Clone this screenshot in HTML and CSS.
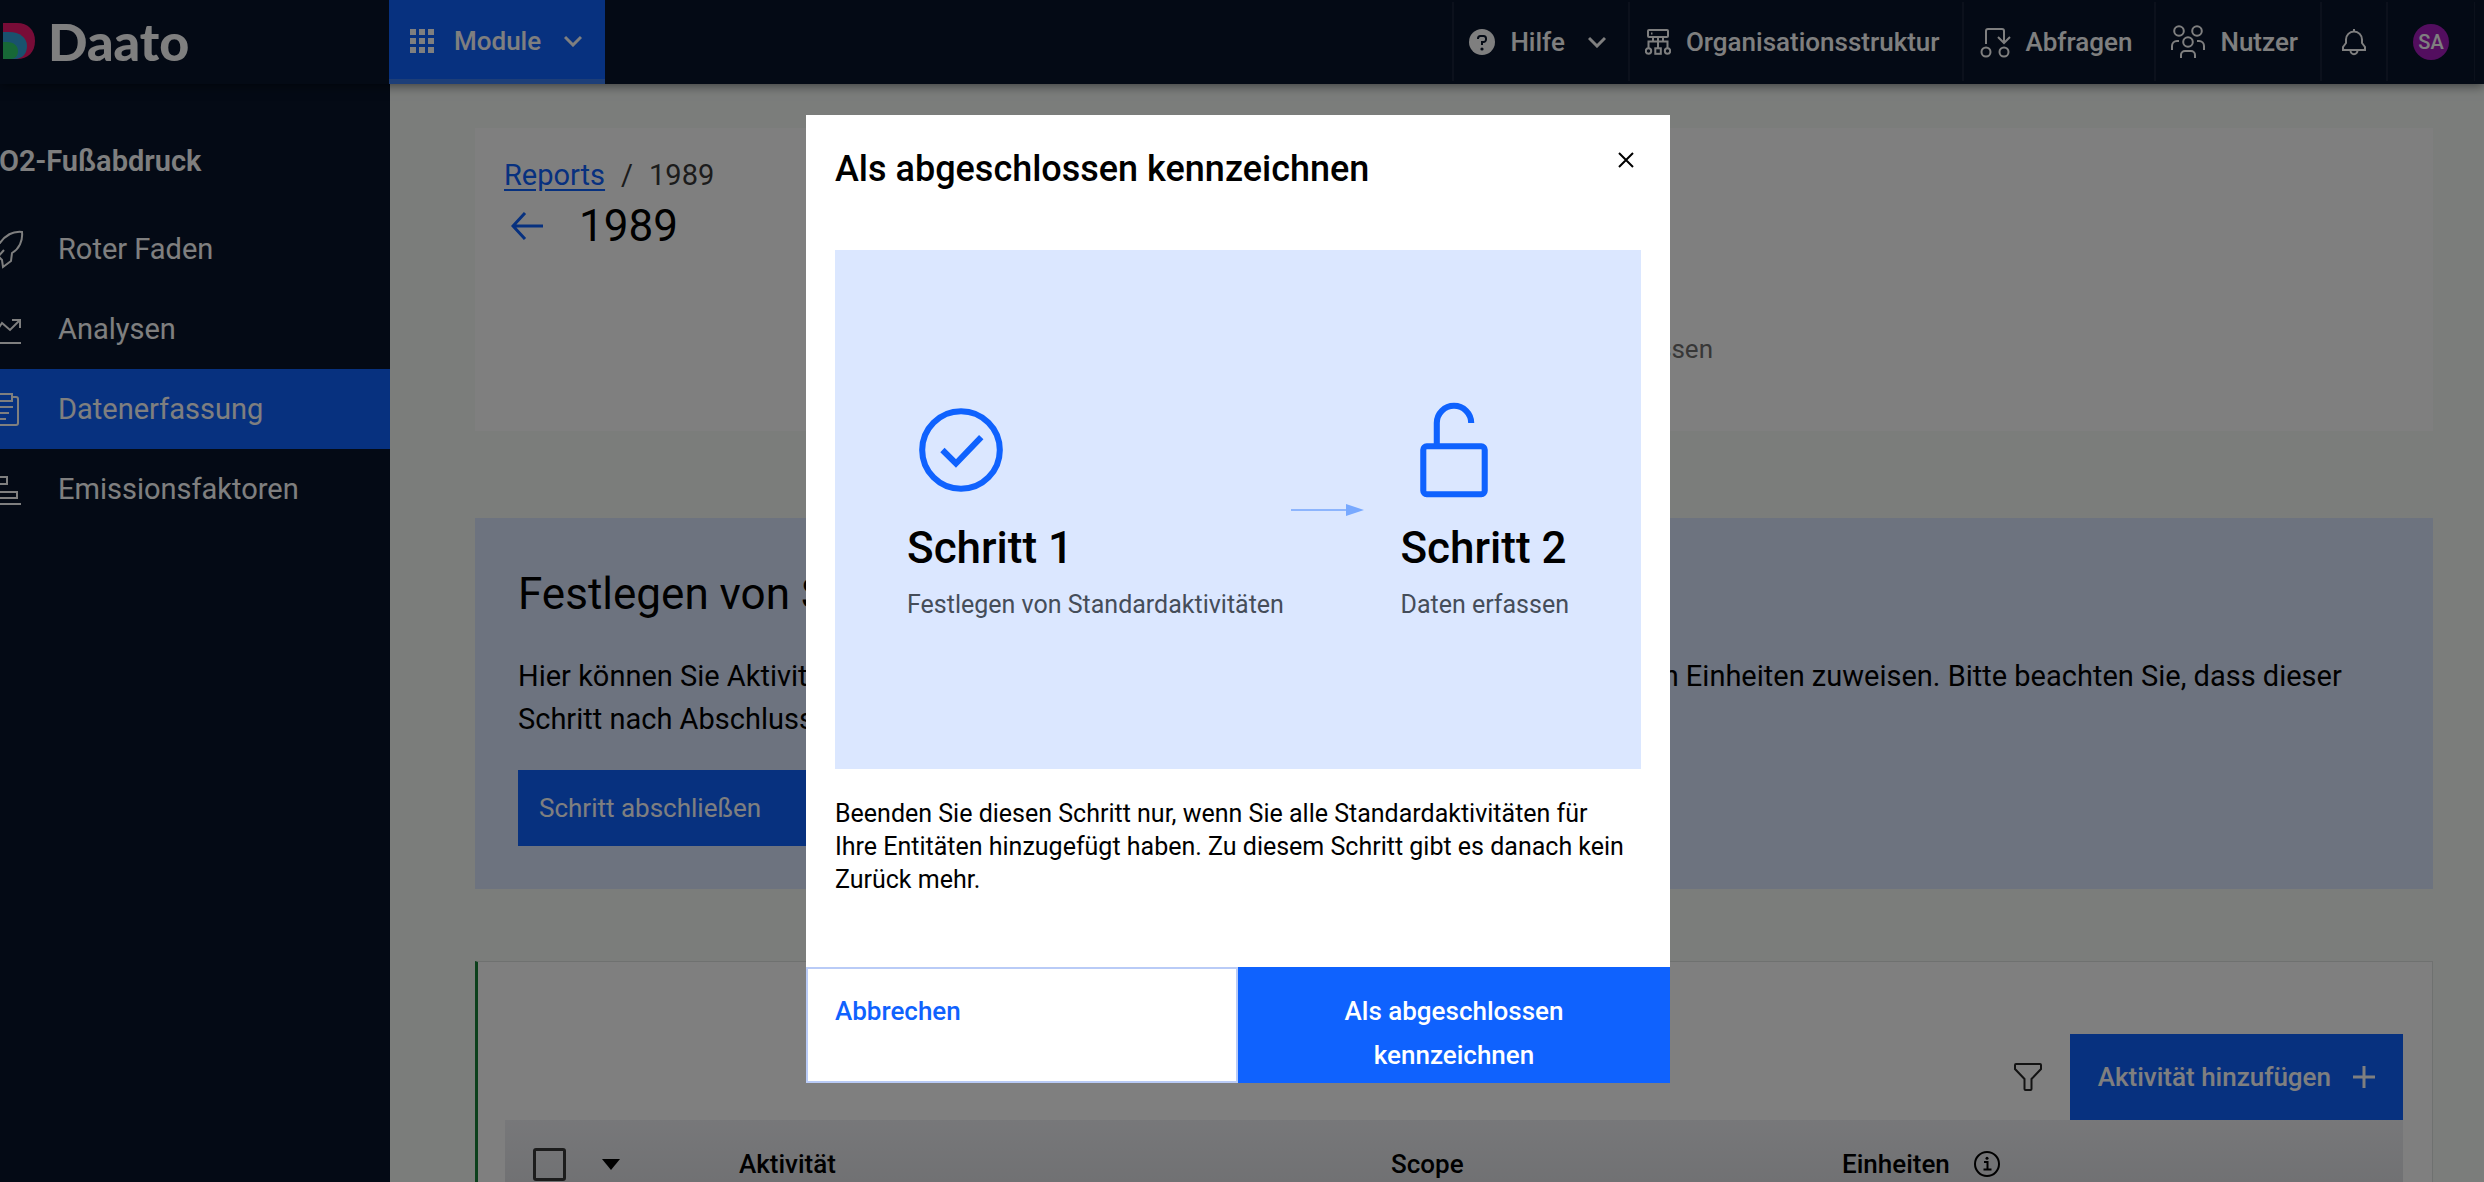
FILE: index.html
```html
<!DOCTYPE html>
<html lang="de">
<head>
   <meta charset="UTF-8">
   <meta name="viewport" content="width=device-width, initial-scale=1.0">
   <title>Daato</title>
   <link rel="stylesheet" href="styles.css">
</head>
<body>
   <header class="header">
      <a class="logo" href="#">
         <svg class="logo-mark" viewBox="0 0 32 36" aria-hidden="true">
            <path d="M0 0H14C25 0 32 7 32 18S25 36 14 36H0Z" fill="#f0186e"/>
            <path d="M0 9H6C17 9 24 15 24 23C24 31 19 36 12 36H0Z" fill="#33a4dc"/>
            <path d="M0 19H4C11 19 15 23 15 28C15 33 12 36 7 36H0Z" fill="#2fd06c"/>
         </svg>
         <span>Daato</span>
      </a>
      <button class="module-btn">
         <svg width="26" height="26" viewBox="0 0 26 26" fill="currentColor" aria-hidden="true">
            <path d="M1 1h6v6H1zM10 1h6v6h-6zM19 1h6v6h-6zM1 10h6v6H1zM10 10h6v6h-6zM19 10h6v6h-6zM1 19h6v6H1zM10 19h6v6h-6zM19 19h6v6h-6z"/>
         </svg>
         Module
         <svg class="chevron" viewBox="0 0 18 12" aria-hidden="true"><path d="M1 2l8 8 8-8"/></svg>
      </button>
      <nav class="header-nav">
         <button class="nav-item">
            <svg width="26" height="26" viewBox="0 0 26 26" aria-hidden="true">
               <circle cx="13" cy="13" r="13" fill="currentColor"/>
               <path d="M9 10V9.500a2.500 2.500 0 0 1 2.500-2.500h3a2.500 2.500 0 0 1 2.500 2.500v1a2.500 2.500 0 0 1-2.500 2.500H13v3" fill="none" stroke="#08142a" stroke-width="2"/>
               <circle cx="13" cy="20" r="1.600" fill="#08142a"/>
            </svg>
            Hilfe
            <svg class="chevron chevron-wide" viewBox="0 0 18 12" aria-hidden="true"><path d="M1 2l8 8 8-8"/></svg>
         </button>
         <a class="nav-item" href="#">
            <svg class="line-icon" width="26" height="28" viewBox="0 0 26 28" aria-hidden="true">
               <rect x="3" y="2" width="20" height="7" rx="1"/>
               <path d="M6 5.500h1.500M13 9v11M8 9v4.500M18 9v4.500M3.500 20v-6.500h19V20"/>
               <circle cx="3.500" cy="23" r="2.700"/>
               <circle cx="22.500" cy="23" r="2.700"/>
               <rect x="10.300" y="20.300" width="5.500" height="5.500"/>
            </svg>
            Organisationsstruktur
         </a>
         <a class="nav-item" href="#">
            <svg class="line-icon" width="32" height="32" viewBox="0 0 32 32" aria-hidden="true">
               <path d="M7 18V5a2 2 0 0 1 2-2h14a2 2 0 0 1 2 2v12M19 11l6 6 6-6"/>
               <circle cx="7" cy="26" r="4.500"/>
               <circle cx="25" cy="26" r="4.500"/>
            </svg>
            Abfragen
         </a>
         <a class="nav-item" href="#">
            <svg class="line-icon" width="34" height="34" viewBox="0 0 34 34" aria-hidden="true">
               <circle cx="8" cy="6" r="4.800"/>
               <circle cx="26" cy="6" r="4.800"/>
               <circle cx="17" cy="17" r="4.800"/>
               <path d="M1 25v-4a5 5 0 0 1 5-5h2M33 25v-4a5 5 0 0 0-5-5h-2M10 33v-3a4 4 0 0 1 4-4h6a4 4 0 0 1 4 4v3"/>
            </svg>
            Nutzer
         </a>
         <button class="nav-item bell-item" aria-label="Benachrichtigungen">
            <svg class="line-icon" width="24" height="28" viewBox="0 0 24 28" aria-hidden="true">
               <path d="M12 1v2.500M1 22v-3l3-4v-3.500a8 8 0 0 1 16 0V15l3 4v3zM8.500 22.500a3.500 3.700 0 0 0 7 0"/>
            </svg>
         </button>
         <button class="nav-item user-item"><span class="avatar">SA</span></button>
      </nav>
   </header>

   <div class="layout">
      <aside class="sidebar">
         <h2 class="sidebar-title">CO2-Fußabdruck</h2>
         <nav class="sidebar-nav">
            <a class="sidebar-item" href="#">
               <svg class="line-icon" width="40" height="40" viewBox="0 0 40 40" aria-hidden="true">
                  <path d="M38 3C28 2 21 7 16 14L8 15l-5 6 7 2 8 8 1 7 8-6 1-8C35 20 39 12 38 3zM20 21l-8 9"/>
               </svg>
               Roter Faden
            </a>
            <a class="sidebar-item" href="#">
               <svg class="line-icon" width="40" height="40" viewBox="0 0 40 40" aria-hidden="true">
                  <path d="M7 4v30h30M9 27l9-13 8 7 10-10M28 11h8v8"/>
               </svg>
               Analysen
            </a>
            <a class="sidebar-item active" href="#">
               <svg class="line-icon" width="40" height="40" viewBox="0 0 40 40" aria-hidden="true">
                  <path d="M14 8H10a2 2 0 0 0-2 2v24a2 2 0 0 0 2 2h22a2 2 0 0 0 2-2V10a2 2 0 0 0-2-2h-4M14 5h14v7H14zM14 18h15M14 24h11M14 30h8"/>
               </svg>
               Datenerfassung
            </a>
            <a class="sidebar-item" href="#">
               <svg class="line-icon" width="40" height="40" viewBox="0 0 40 40" aria-hidden="true">
                  <path d="M7 4v31h30M7 8h16v7H7zM7 23h26v6H7z"/>
               </svg>
               Emissionsfaktoren
            </a>
         </nav>
      </aside>

      <main class="content">
         <section class="page-head">
            <div class="breadcrumb"><a href="#">Reports</a><span>/</span><span>1989</span></div>
            <div class="title-row">
               <a class="back-link" href="#" aria-label="Zurück">
                  <svg width="32" height="28" viewBox="0 0 32 28" aria-hidden="true"><path d="M32 14H2M14 1L2 14l12 13"/></svg>
               </a>
               <h1 class="page-title">1989</h1>
            </div>
            <p class="step-label">Daten erfassen</p>
         </section>

         <section class="info-panel">
            <h2 class="info-title">Festlegen von Standardaktivitäten</h2>
            <p class="info-text">Hier können Sie Aktivitäten hinzufügen, bearbeiten und sie anschließend den gewünschten Einheiten zuweisen. Bitte beachten Sie, dass dieser Schritt nach Abschluss gesperrt wird.</p>
            <button class="primary-btn finish-btn">Schritt abschließen</button>
         </section>

         <section class="table-card">
            <div class="toolbar">
               <button class="filter-btn" aria-label="Filter">
                  <svg width="28" height="28" viewBox="0 0 28 28" aria-hidden="true">
                     <path d="M2 1h24a1 1 0 0 1 1 1v4L17.500 16v10a1 1 0 0 1-1 1h-5a1 1 0 0 1-1-1V16L1 6V2a1 1 0 0 1 1-1z"/>
                  </svg>
               </button>
               <button class="primary-btn add-btn">
                  Aktivität hinzufügen
                  <svg width="22" height="22" viewBox="0 0 22 22" aria-hidden="true"><path d="M11 0v22M0 11h22"/></svg>
               </button>
            </div>
            <table class="activity-table">
               <thead>
                  <tr>
                     <th class="col-select"><input class="checkbox" type="checkbox" aria-label="Alle auswählen"></th>
                     <th class="col-sort">
                        <svg width="18" height="11" viewBox="0 0 18 11" aria-hidden="true"><path d="M0 0h18L9 11z"/></svg>
                     </th>
                     <th class="col-activity">Aktivität</th>
                     <th class="col-scope">Scope</th>
                     <th>
                        <span class="with-info">Einheiten
                           <svg width="26" height="26" viewBox="0 0 26 26" aria-hidden="true">
                              <circle cx="13" cy="13" r="12" fill="none" stroke="#000" stroke-width="2"/>
                              <path d="M10 11h3.500v7.500M9.500 18.500h8" fill="none" stroke="#000" stroke-width="2"/>
                              <circle cx="13" cy="7.200" r="1.500"/>
                           </svg>
                        </span>
                     </th>
                  </tr>
               </thead>
            </table>
         </section>
      </main>
   </div>

   <div class="overlay">
      <div class="modal" role="dialog" aria-modal="true" aria-labelledby="modal-title">
         <div class="modal-header">
            <h2 class="modal-title" id="modal-title">Als abgeschlossen kennzeichnen</h2>
            <button class="close-btn" aria-label="Schließen">
               <svg width="16" height="16" viewBox="0 0 16 16" aria-hidden="true"><path d="M1 1l14 14M15 1L1 15"/></svg>
            </button>
         </div>
         <div class="modal-body">
            <div class="steps">
               <div class="step">
                  <svg class="step-icon" viewBox="0 0 32 32" aria-hidden="true">
                     <circle cx="16" cy="16" r="11.500"/>
                     <path d="M10.500 16l4 4 7.500-7.800"/>
                  </svg>
                  <h3 class="step-title">Schritt 1</h3>
                  <p class="step-text">Festlegen von Standardaktivitäten</p>
               </div>
               <svg class="step-arrow" width="73" height="12" viewBox="0 0 73 12" aria-hidden="true">
                  <path d="M0 6h56" stroke="#8db5fd" stroke-width="2"/>
                  <path d="M55 0l18 6-18 6z" fill="#78a9ff"/>
               </svg>
               <div class="step">
                  <svg class="step-icon" viewBox="0 0 32 32" aria-hidden="true">
                     <rect x="6.900" y="14.900" width="18.200" height="14.200" rx="1"/>
                     <path d="M10.900 15V8a5.100 5.100 0 0 1 10.200 0"/>
                  </svg>
                  <h3 class="step-title">Schritt 2</h3>
                  <p class="step-text">Daten erfassen</p>
               </div>
            </div>
            <p class="modal-text">Beenden Sie diesen Schritt nur, wenn Sie alle Standardaktivitäten für<br>Ihre Entitäten hinzugefügt haben. Zu diesem Schritt gibt es danach kein Zurück mehr.</p>
         </div>
         <div class="modal-footer">
            <button class="modal-btn cancel-btn">Abbrechen</button>
            <button class="modal-btn confirm-btn">Als abgeschlossen kennzeichnen</button>
         </div>
      </div>
   </div>
</body>
</html>
```

FILE: styles.css
```css
* {
   box-sizing: border-box;
}
body {
   margin: 0;
   height: 100vh;
   overflow: hidden;
   display: flex;
   flex-direction: column;
   font-family: Roboto, "Liberation Sans", sans-serif;
   font-size: 26px;
   color: #000;
   background-color: #f6faf7;
}
h1, h2, h3, p {
   margin: 0;
}
button {
   font: inherit;
   border: none;
   border-radius: 0;
   cursor: pointer;
}
svg {
   flex-shrink: 0;
}
.line-icon {
   fill: none;
   stroke: currentColor;
   stroke-width: 2;
}

/* header */
.header {
   position: relative;
   display: flex;
   height: 84px;
   flex-shrink: 0;
   background-color: #08142a;
   color: #fff;
   box-shadow: 0 2px 10px rgba(0, 0, 0, 0.5);
}
.logo {
   display: flex;
   align-items: center;
   gap: 13px;
   width: 389px;
   padding: 0 0 3px 3px;
   color: #fff;
   font-family: Lato, sans-serif;
   font-size: 52px;
   font-weight: 900;
   line-height: 48px;
   text-decoration: none;
}
.logo-mark {
   width: 32px;
   height: 36px;
}
.module-btn {
   display: flex;
   align-items: center;
   gap: 19px;
   padding: 3px 23px 0 20px;
   background-color: #0f62fe;
   border-bottom: 5px solid #3a7cf0;
   color: #fff;
   font-weight: 500;
}
.chevron {
   width: 18px;
   height: 12px;
   margin-left: 4px;
   fill: none;
   stroke: currentColor;
   stroke-width: 3;
}
.chevron-wide {
   margin-left: 8px;
}
.header-nav {
   display: flex;
   margin-left: auto;
   margin-right: 9px;
   padding: 2px 0 3px;
}
.nav-item {
   display: flex;
   align-items: center;
   gap: 15px;
   padding: 0 22px 0 15px;
   background: none;
   border-left: 2px solid #182338;
   color: #fff;
   font-weight: 500;
   text-decoration: none;
}
.bell-item {
   padding: 0 20px;
}
.user-item {
   padding: 0 25px;
   border-right: 1px solid #182338;
}
.avatar {
   width: 36px;
   height: 36px;
   border-radius: 50%;
   background-color: #a61cbe;
   font-size: 20px;
   line-height: 36px;
   text-align: center;
}

/* layout */
.layout {
   display: flex;
   flex: 1;
   min-height: 0;
}
.sidebar {
   width: 390px;
   flex-shrink: 0;
   overflow: hidden;
   background-color: #08142a;
   color: #fff;
}
.sidebar-title {
   margin-left: -20px;
   padding: 60px 0 31px;
   font-size: 29px;
   line-height: 34px;
   font-weight: 600;
   white-space: nowrap;
}
.sidebar-item {
   display: flex;
   align-items: center;
   gap: 34px;
   height: 80px;
   margin-left: -16px;
   color: #fff;
   font-size: 29px;
   text-decoration: none;
}
.sidebar-item.active {
   background-color: #0f62fe;
}
.content {
   flex: 1;
   min-width: 0;
   padding: 44px 51px 0 85px;
}

/* page head */
.page-head {
   height: 303px;
   padding: 29px;
   background-color: #fff;
}
.breadcrumb {
   display: flex;
   gap: 16px;
   font-size: 29px;
   line-height: 36px;
   color: #393939;
}
.breadcrumb a {
   color: #0f62fe;
   text-underline-offset: 4px;
}
.title-row {
   display: flex;
   align-items: center;
   gap: 36px;
   padding-left: 7px;
}
.back-link {
   display: flex;
}
.back-link svg {
   fill: none;
   stroke: #0f62fe;
   stroke-width: 3;
}
.page-title,
.info-title {
   font-size: 44px;
   line-height: 66px;
   font-weight: 400;
}
.step-label {
   padding: 72px 691px 0 0;
   line-height: 36px;
   color: #6f6f6f;
   text-align: right;
}

/* info panel */
.info-panel {
   margin-top: 87px;
   padding: 43px;
   background-color: #dbe7ff;
}
.info-text {
   margin-top: 28px;
   font-size: 29px;
   line-height: 43px;
}
.primary-btn {
   background-color: #0f62fe;
   color: #fff;
}
.finish-btn {
   height: 76px;
   margin-top: 29px;
   padding: 0 96px 0 21px;
}

/* table */
.table-card {
   margin-top: 72px;
   padding: 72px 29px 0 27px;
   background-color: #fff;
   border: 1px solid #dfe3e0;
   border-left: 3px solid #198038;
}
.toolbar {
   display: flex;
   justify-content: flex-end;
}
.filter-btn {
   display: flex;
   align-items: center;
   padding: 0 28px;
   background: none;
}
.filter-btn svg {
   fill: none;
   stroke: #262626;
   stroke-width: 2;
}
.add-btn {
   display: flex;
   align-items: center;
   gap: 22px;
   height: 86px;
   padding: 0 28px;
   font-weight: 500;
}
.add-btn svg {
   stroke: currentColor;
   stroke-width: 3;
}
.activity-table {
   width: 100%;
   border-collapse: collapse;
   table-layout: fixed;
   background: linear-gradient(#eff0f4, #dcdde1);
}
.activity-table th {
   height: 88px;
   padding: 0;
   font-weight: 500;
   text-align: left;
}
.activity-table .col-select {
   width: 97px;
   padding-left: 28px;
}
.col-sort {
   width: 137px;
}
.col-sort svg {
   display: block;
}
.col-activity {
   width: 652px;
}
.col-scope {
   width: 451px;
}
.checkbox {
   display: block;
   appearance: none;
   width: 33px;
   height: 33px;
   margin: 0;
   border: 3px solid #393939;
   border-radius: 3px;
}
.with-info {
   display: flex;
   align-items: center;
   gap: 24px;
}

/* modal */
.overlay {
   position: fixed;
   inset: 0;
   display: flex;
   align-items: center;
   justify-content: center;
   padding: 16px 8px 0 0;
   background-color: rgba(0, 0, 0, 0.5);
}
.modal {
   width: 864px;
   background-color: #fff;
}
.modal-header {
   display: flex;
   justify-content: space-between;
   padding: 29px 29px 0;
}
.modal-title {
   font-size: 36px;
   line-height: 50px;
   font-weight: 500;
}
.close-btn {
   display: flex;
   align-self: flex-start;
   padding: 8px 7px;
   background: none;
}
.close-btn svg {
   stroke: #000;
   stroke-width: 2;
}
.modal-body {
   padding: 56px 29px 71px;
}
.steps {
   display: flex;
   align-items: center;
   justify-content: space-between;
   height: 519px;
   padding: 0 72px;
   background-color: #dbe7ff;
}
.step-icon {
   display: block;
   width: 108px;
   height: 108px;
   fill: none;
   stroke: #0f62fe;
   stroke-width: 1.8;
}
.step-title {
   margin: 15px 0 10px;
   font-size: 44px;
   line-height: 58px;
   font-weight: 500;
}
.step-text {
   font-size: 25px;
   line-height: 36px;
   color: #454d59;
}
.step-arrow {
   margin-right: 30px;
}
.modal-text {
   margin-top: 28px;
   font-size: 25px;
   line-height: 33px;
}
.modal-footer {
   display: flex;
}
.modal-btn {
   width: 50%;
   height: 116px;
   font-weight: 500;
   line-height: 44px;
}
.cancel-btn {
   display: flex;
   padding: 20px 27px;
   border: 2px solid #b9cbf7;
   background-color: #fff;
   color: #0f62fe;
}
.confirm-btn {
   padding: 22px 96px;
   background-color: #0f62fe;
   color: #fff;
}
```
